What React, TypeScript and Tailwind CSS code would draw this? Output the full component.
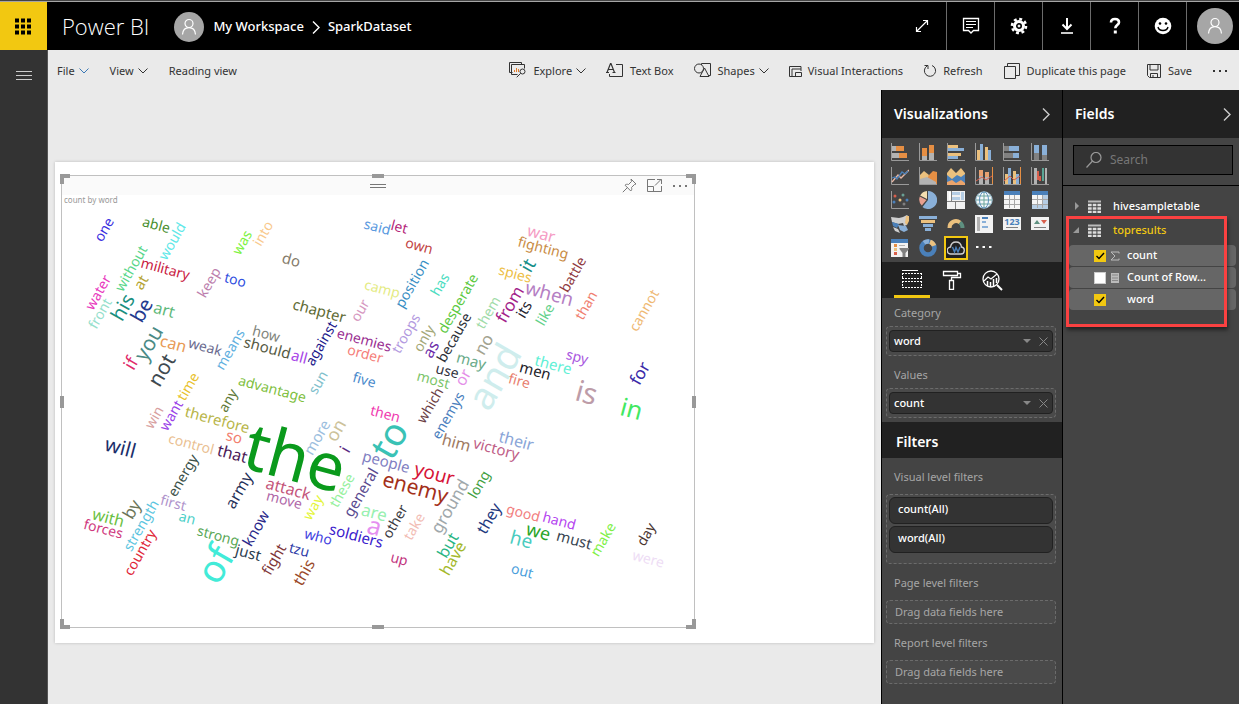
import React from 'react';
import { clsx } from 'clsx';

type Direction = 'up' | 'down';
type Word = [text: string, x: number, y: number, size: number, direction: Direction, color: string];

const WORDS: Word[] = [
  ['the', 294, 463, 66, 'down', '#0a9a1c'],
  ['to', 392, 441, 38, 'up', '#3ac2b5'],
  ['of', 218, 566, 38, 'up', '#42ebd8'],
  ['and', 497, 378, 38, 'up', '#cfeded'],
  ['is', 586, 395, 29, 'down', '#bd9ca8'],
  ['in', 631, 411, 25, 'down', '#42e862'],
  ['a', 374, 528, 25, 'down', '#e590f0'],
  ['enemy', 415, 489, 21, 'down', '#a3301a'],
  ['you', 150, 344, 21, 'up', '#4a8a85'],
  ['not', 163, 371, 21, 'up', '#3f4a50'],
  ['will', 120, 449, 20, 'down', '#1c2f6b'],
  ['your', 434, 475, 19, 'down', '#d61438'],
  ['when', 549, 295, 19, 'down', '#b57fc4'],
  ['his', 124, 308, 20, 'up', '#1a8f80'],
  ['be', 143, 311, 20, 'up', '#243a8f'],
  ['it', 529, 266, 19, 'up', '#178f8a'],
  ['he', 521, 541, 19, 'down', '#4accc0'],
  ['we', 538, 533, 18, 'down', '#2aa52a'],
  ['if', 132, 364, 18, 'up', '#e02a6a'],
  ['on', 337, 431, 18, 'up', '#ccc29a'],
  ['ground', 451, 507, 17, 'up', '#a0a8ab'],
  ['from', 511, 305, 17, 'up', '#a31f8a'],
  ['for', 641, 374, 17, 'up', '#3a2aa8'],
  ['are', 374, 514, 17, 'down', '#98f0b0'],
  ['no', 485, 345, 17, 'up', '#a3a390'],
  ['by', 133, 510, 17, 'up', '#6b7558'],
  ['with', 108, 519, 16, 'down', '#6abf42'],
  ['can', 173, 345, 16, 'down', '#e89a55'],
  ['war', 541, 235, 16, 'down', '#f59cc4'],
  ['as', 432, 350, 16, 'up', '#6a2aa8'],
  ['or', 464, 378, 16, 'up', '#e48fe8'],
  ['him', 456, 444, 16, 'down', '#a07a62'],
  ['their', 516, 442, 16, 'down', '#8aa5d8'],
  ['they', 490, 519, 16, 'up', '#1f3a80'],
  ['but', 449, 546, 16, 'up', '#2ab583'],
  ['have', 454, 559, 16, 'up', '#a3b82a'],
  ['that', 232, 455, 16, 'down', '#4a1a58'],
  ['army', 240, 491, 16, 'up', '#1f2f58'],
  ['attack', 288, 490, 16, 'down', '#c4557a'],
  ['this', 305, 573, 16, 'up', '#9a4a2a'],
  ['i', 346, 450, 16, 'up', '#5a2a82'],
  ['art', 164, 311, 16, 'down', '#5fb97a'],
  ['at', 142, 283, 15, 'up', '#b5a433'],
  ['should', 267, 349, 15, 'down', '#575b45'],
  ['its', 525, 310, 15, 'up', '#22202c'],
  ['may', 471, 362, 15, 'down', '#6aab8a'],
  ['men', 535, 372, 15, 'down', '#222228'],
  ['there', 553, 366, 15, 'down', '#62f0d6'],
  ['victory', 496, 450, 15, 'down', '#bf5f88'],
  ['people', 386, 463, 15, 'down', '#8080c2'],
  ['general', 362, 493, 15, 'up', '#5a4a90'],
  ['soldiers', 356, 537, 15, 'down', '#3a20cc'],
  ['must', 574, 541, 15, 'down', '#3a4652'],
  ['so', 234, 438, 15, 'down', '#f28070'],
  ['more', 318, 438, 15, 'up', '#9cbede'],
  ['just', 248, 554, 15, 'down', '#2c4050'],
  ['know', 257, 529, 15, 'up', '#2a288a'],
  ['fight', 275, 560, 15, 'up', '#80383a'],
  ['one', 105, 230, 14, 'up', '#3b2fe0'],
  ['able', 156, 226, 14, 'down', '#4a8f2f'],
  ['would', 173, 242, 14, 'up', '#5fe8e8'],
  ['was', 243, 243, 14, 'up', '#7df23f'],
  ['into', 264, 234, 14, 'up', '#f9c98d'],
  ['do', 291, 261, 15, 'down', '#857b6b'],
  ['without', 132, 269, 14, 'up', '#5ad68a'],
  ['military', 165, 270, 14, 'down', '#c9203f'],
  ['keep', 210, 283, 14, 'up', '#bd7fae'],
  ['too', 235, 281, 14, 'down', '#2f4fe0'],
  ['water', 99, 293, 14, 'up', '#e838bd'],
  ['front', 101, 314, 14, 'up', '#96e0cc'],
  ['chapter', 319, 312, 15, 'down', '#5f6b35'],
  ['how', 266, 335, 14, 'down', '#7f857b'],
  ['against', 322, 344, 14, 'up', '#22188a'],
  ['all', 299, 358, 15, 'down', '#a845e8'],
  ['weak', 205, 348, 14, 'down', '#6b6b8f'],
  ['means', 231, 350, 14, 'up', '#5fb0e0'],
  ['time', 189, 387, 14, 'up', '#e8c12a'],
  ['advantage', 272, 390, 14, 'down', '#7fbf3f'],
  ['sun', 319, 383, 14, 'up', '#80c0cc'],
  ['said', 377, 228, 14, 'down', '#5a9ae0'],
  ['let', 399, 228, 14, 'down', '#b5287a'],
  ['own', 419, 247, 14, 'down', '#c24545'],
  ['position', 413, 284, 14, 'up', '#3a8fc4'],
  ['has', 441, 285, 14, 'up', '#4adcc0'],
  ['camp', 382, 290, 14, 'down', '#e4eb85'],
  ['our', 361, 311, 14, 'up', '#d698bf'],
  ['desperate', 459, 304, 14, 'up', '#5cc93f'],
  ['them', 489, 313, 14, 'up', '#a0dba8'],
  ['like', 546, 315, 14, 'up', '#62d18a'],
  ['than', 587, 306, 14, 'up', '#f08070'],
  ['battle', 574, 275, 14, 'up', '#8f3b42'],
  ['spies', 515, 275, 14, 'down', '#edc047'],
  ['fighting', 543, 249, 14, 'down', '#c98c45'],
  ['cannot', 645, 311, 14, 'up', '#efb974'],
  ['enemies', 364, 341, 14, 'down', '#9a2f92'],
  ['order', 365, 355, 14, 'down', '#f57f7a'],
  ['troops', 407, 334, 14, 'up', '#b39ae0'],
  ['only', 425, 339, 14, 'up', '#a3a878'],
  ['because', 455, 338, 14, 'up', '#2d3038'],
  ['use', 447, 372, 14, 'down', '#333340'],
  ['most', 433, 381, 14, 'down', '#7cc56a'],
  ['fire', 519, 382, 14, 'down', '#e88070'],
  ['spy', 577, 358, 14, 'down', '#a857e0'],
  ['five', 364, 381, 14, 'down', '#4a8acc'],
  ['then', 385, 415, 14, 'down', '#f03ab0'],
  ['which', 431, 406, 14, 'up', '#6b3f45'],
  ['enemys', 449, 416, 14, 'up', '#4a80bd'],
  ['long', 480, 485, 14, 'up', '#42a042'],
  ['these', 343, 491, 14, 'up', '#94f09c'],
  ['other', 396, 522, 14, 'up', '#3a3a42'],
  ['take', 415, 527, 14, 'up', '#f2bdb5'],
  ['up', 399, 560, 14, 'down', '#c23580'],
  ['good', 523, 514, 14, 'down', '#f28080'],
  ['hand', 559, 522, 14, 'down', '#b545f0'],
  ['make', 604, 540, 14, 'up', '#80f048'],
  ['day', 647, 535, 14, 'up', '#4a3530'],
  ['were', 648, 560, 14, 'down', '#eeddf5'],
  ['out', 522, 572, 14, 'down', '#4ca0dc'],
  ['win', 155, 418, 14, 'up', '#d8a0a0'],
  ['want', 172, 416, 14, 'up', '#9a42e8'],
  ['therefore', 217, 421, 15, 'down', '#b8b548'],
  ['any', 229, 401, 14, 'up', '#5f7a3a'],
  ['control', 191, 445, 14, 'down', '#eabf92'],
  ['energy', 184, 476, 14, 'up', '#3a5048'],
  ['move', 284, 501, 14, 'down', '#b068a8'],
  ['way', 314, 508, 14, 'up', '#e4f53a'],
  ['first', 173, 504, 14, 'down', '#b094cc'],
  ['forces', 103, 530, 14, 'down', '#d03a80'],
  ['strength', 142, 526, 14, 'up', '#5cc5e0'],
  ['an', 187, 519, 14, 'down', '#4cd0c8'],
  ['country', 141, 553, 14, 'up', '#e02838'],
  ['strong', 218, 537, 14, 'down', '#5ba858'],
  ['who', 318, 538, 14, 'down', '#4242e0'],
  ['tzu', 299, 551, 14, 'down', '#3040a8'],
];

const ANGLE: Record<Direction, number> = { up: -60, down: 15 };

function WordCloud() {
  return (
    <svg viewBox="62 206 632 421" className="block w-full font-['Noto_Sans',sans-serif]" role="img" aria-label="count by word">
      {WORDS.map(([text, x, y, size, direction, color]) => (
        <text
          key={text}
          transform={`translate(${x} ${y}) rotate(${ANGLE[direction]})`}
          y={size * 0.27}
          fontSize={size}
          fill={color}
          textAnchor="middle"
        >
          {text}
        </text>
      ))}
    </svg>
  );
}

interface IconProps {
  children: React.ReactNode;
  size?: number;
  className?: string;
}

function Icon({ children, size = 18, className = '' }: IconProps) {
  return (
    <svg
      width={size}
      height={size}
      viewBox={`0 0 ${size} ${size}`}
      fill="none"
      stroke="currentColor"
      className={clsx('shrink-0', className)}
      aria-hidden="true"
    >
      {children}
    </svg>
  );
}

function Chevron({ className = '' }: { className?: string }) {
  return (
    <svg width="10" height="6" viewBox="0 0 10 6" fill="none" stroke="currentColor" className={className} aria-hidden="true">
      <path d="M.5.5 5 5 9.5.5" />
    </svg>
  );
}

function ChevronRight({ className = '' }: { className?: string }) {
  return (
    <svg width="8" height="13" viewBox="0 0 8 13" fill="none" stroke="currentColor" className={className} aria-hidden="true">
      <path d="M1 .5 7 6.5 1 12.5" strokeWidth="1.4" />
    </svg>
  );
}

function Avatar({ large = false }: { large?: boolean }) {
  return (
    <span className={clsx('flex items-center justify-center rounded-full bg-[#a6a6a6] text-white', large ? 'size-9' : 'size-[30px]')}>
      <Icon size={18}>
        <circle cx="9" cy="5.5" r="4" strokeWidth="1.2" />
        <path d="M2.5 16.5c.3-4 2.8-6.8 6.5-6.8s6.2 2.8 6.5 6.8" strokeWidth="1.2" />
      </Icon>
    </span>
  );
}

const HEADER_ACTIONS = [
  {
    label: 'Comments',
    icon: (
      <Icon>
        <path d="M1.5 1.5h15v12h-5L9 16l-2.5-2.5h-5z" strokeWidth="1.3" />
        <path d="M4 4.500h10M4 7.500h10M4 10.500h7" />
      </Icon>
    ),
  },
  {
    label: 'Settings',
    icon: (
      <Icon>
        <circle cx="9" cy="9" r="4.5" strokeWidth="3" />
        <circle cx="9" cy="9" r="7" strokeWidth="2.6" strokeDasharray="2.9 2.6" />
        <circle cx="9" cy="9" r="1" fill="currentColor" />
      </Icon>
    ),
  },
  {
    label: 'Download',
    icon: (
      <Icon>
        <path d="M9 1v11M4.5 7.5 9 12l4.5-4.5" strokeWidth="2" />
        <path d="M3 16h12" strokeWidth="1.6" />
      </Icon>
    ),
  },
  {
    label: 'Help',
    icon: (
      <Icon>
        <path d="M5 5.5C5 3.3 6.5 2 9 2s4 1.3 4 3.3c0 2.7-3.7 2.9-3.7 5.9" strokeWidth="2.6" />
        <path d="M9.3 13.5v3" strokeWidth="3" />
      </Icon>
    ),
  },
  {
    label: 'Feedback',
    icon: (
      <Icon>
        <circle cx="9" cy="9" r="8.3" fill="currentColor" stroke="none" />
        <circle cx="6" cy="6.5" r="1.3" fill="#000" stroke="none" />
        <circle cx="12" cy="6.5" r="1.3" fill="#000" stroke="none" />
        <path d="M4 10c1 4.6 9 4.6 10 0" stroke="#000" strokeWidth="1.4" />
      </Icon>
    ),
  },
];

function Header() {
  return (
    <header className="flex h-[50px] border-t border-[#444] bg-black text-white">
      <div className="flex flex-1 border-t border-[#a5a5a5]">
        <button className="flex w-[47px] items-center justify-center bg-[#f2c811] text-black" aria-label="App launcher">
          <Icon size={17}>
            <path d="M0 2.5h17M0 8.5h17M0 14.5h17" strokeWidth="4" strokeDasharray="4 2" />
          </Icon>
        </button>
        <a href="#home" className="flex items-center pr-[25px] pl-[15px] font-['Open_Sans',sans-serif] text-[22px] font-light">
          Power BI
        </a>
        <nav className="flex items-center pt-0.5 text-[13px] font-medium">
          <Avatar />
          <a href="#workspace" className="ml-[9px]">My Workspace</a>
          <ChevronRight className="mx-2" />
          <a href="#dataset">SparkDataset</a>
        </nav>
        <div className="ml-auto flex">
          <button className="flex w-12 items-center justify-center" aria-label="Full screen">
            <Icon size={14}>
              <path d="M2 12 12 2M8 1.5h4.500V6M6 12.5H1.500V8" strokeWidth="1.2" />
            </Icon>
          </button>
          {HEADER_ACTIONS.map(({ label, icon }) => (
            <button key={label} aria-label={label} className="flex w-12 items-center justify-center border-l border-[#6b6b6b]">
              {icon}
            </button>
          ))}
          <button className="flex w-[53px] items-center justify-center border-l border-[#6b6b6b] pl-1" aria-label="Account">
            <Avatar large />
          </button>
        </div>
      </div>
    </header>
  );
}

const TOOLS = [
  {
    label: 'Explore',
    chevron: true,
    icon: (
      <Icon>
        <path d="M3.5 10.5h-3V.5h12v2M8.500 12.500h-6v-10h13v4" />
        <path d="M5.5 10V8M7.5 10V6M9.5 10V7" stroke="#e07b2a" />
        <circle cx="13.500" cy="9.500" r="2.500" />
        <path d="m11.700 11.300-4 4" />
      </Icon>
    ),
  },
  {
    label: 'Text Box',
    icon: (
      <Icon>
        <path d="M10 2.5h6.5v12h-13V12" />
        <path d="M1 10.5 4.500 1.5h.5l3.500 9M2.500 7.500h5M0 10.500h3M6.500 10.500h3" strokeWidth="1.2" />
      </Icon>
    ),
  },
  {
    label: 'Shapes',
    chevron: true,
    icon: (
      <Icon>
        <path d="M7.5 3V1.500h9v12h-2" />
        <circle cx="5" cy="6.5" r="4.5" />
        <path d="m10.500 6 4.500 8.500H6z" />
      </Icon>
    ),
  },
  {
    label: 'Visual Interactions',
    icon: (
      <Icon size={13}>
        <path d="M7 11.5H.5V1.500h11.500V6M3 11.500V4h9" />
        <path d="M6.500 7.500h6v4h-6z" />
      </Icon>
    ),
  },
  {
    label: 'Refresh',
    icon: (
      <Icon size={14}>
        <path d="M9 1.500a5.600 5.600 0 1 1-5 .500M1.500 1.500H5v3.500" />
      </Icon>
    ),
  },
  {
    label: 'Duplicate this page',
    icon: (
      <Icon>
        <path d="M1.500 4.500h11v12h-11zM4.500 4.500v-3h12v12h-4" />
      </Icon>
    ),
  },
  {
    label: 'Save',
    icon: (
      <Icon size={16}>
        <path d="M1.500 1.500h13v13h-11l-2-2z" />
        <path d="M4 1.500v5.500h8V1.500M4.500 14.500v-4h7v4M7 14.500V12" />
      </Icon>
    ),
  },
];

function Toolbar() {
  return (
    <div className="flex h-10 items-center bg-[#eaeaea] px-[9px] pt-0.5 text-[11px] text-[#333]">
      <div className="flex gap-[21px]">
        <button className="flex items-center gap-1">File <Chevron className="text-[#3a78b5]" /></button>
        <button className="flex items-center gap-1">View <Chevron /></button>
        <button>Reading view</button>
      </div>
      <div className="ml-auto flex items-center gap-5">
        {TOOLS.map(({ label, icon, chevron }) => (
          <button key={label} className="flex items-center gap-[6px] whitespace-nowrap">
            {icon}
            <span>{label}</span>
            {chevron && <Chevron className="-ml-0.5" />}
          </button>
        ))}
        <button aria-label="More options" className="pr-0.5">
          <Icon size={16}>
            <path d="M1 8h2M7 8h2M13 8h2" strokeWidth="2" />
          </Icon>
        </button>
      </div>
    </div>
  );
}

function ResizeHandles() {
  const handle = 'pointer-events-none absolute border-[#999]';
  return (
    <>
      <span className={clsx(handle, '-top-0.5 -left-0.5 size-[10px] border-t-4 border-l-4')} />
      <span className={clsx(handle, '-top-0.5 -right-0.5 size-[10px] border-t-4 border-r-4')} />
      <span className={clsx(handle, '-bottom-0.5 -left-0.5 size-[10px] border-b-4 border-l-4')} />
      <span className={clsx(handle, '-right-0.5 -bottom-0.5 size-[10px] border-r-4 border-b-4')} />
      <span className={clsx(handle, '-top-0.5 left-1/2 w-3 -translate-x-1/2 border-t-4')} />
      <span className={clsx(handle, '-bottom-0.5 left-1/2 w-3 -translate-x-1/2 border-b-4')} />
      <span className={clsx(handle, 'top-1/2 -left-0.5 h-3 -translate-y-1/2 border-l-4')} />
      <span className={clsx(handle, 'top-1/2 -right-0.5 h-3 -translate-y-1/2 border-r-4')} />
    </>
  );
}

function ReportCanvas() {
  return (
    <main className="min-w-0 flex-1 bg-[#eaeaea] px-[7px] pt-[72px]">
      <div className="aspect-[819/481] bg-white px-[6px] pt-[13px] shadow-[0_0_3px_rgba(0,0,0,0.2)]">
        <section className="relative w-[634px] max-w-full border border-[#c0c0c0]">
          <div className="grid h-[19px] grid-cols-3 items-center bg-[#fafafa] px-1.5 text-[#777]">
            <span />
            <Icon size={16} className="justify-self-center">
              <path d="M0 6.5h16M0 9.5h16" />
            </Icon>
            <div className="flex items-center justify-end gap-[10px]">
              <button aria-label="Pin visual">
                <Icon size={15}>
                  <path d="m9 1 5 5-1.500.5-3 3c.5 1.500.2 2.700-.7 3.500L3 7.200c.8-.9 2-1.200 3.500-.7l3-3zM5.500 9.500.8 14.200" />
                </Icon>
              </button>
              <button aria-label="Focus mode">
                <Icon size={15}>
                  <path d="M8 1.500H.5v12h14V8M.5 8.500h6v5M8 7.500l6-6M10 1.500h4.500V6" />
                </Icon>
              </button>
              <button aria-label="More options">
                <Icon size={16}>
                  <path d="M1 8h2M7 8h2M13 8h2" strokeWidth="2" />
                </Icon>
              </button>
            </div>
          </div>
          <h2 className="h-[11px] px-0.5 text-[8px] leading-[10px] text-[#999]">count by word</h2>
          <WordCloud />
          <ResizeHandles />
        </section>
      </div>
    </main>
  );
}

const ORANGE = '#e68f44';
const TAN = '#ecc17e';
const BLUE = '#8ab0d8';
const NAVY = '#4a80ba';
const SILVER = '#b3b3b3';
const GREY = '#808080';
const RED = '#d95f4c';

type Rect = [x: number, y: number, width: number, height: number, fill: string];

function Rects({ items }: { items: Rect[] }) {
  return (
    <>
      {items.map(([x, y, width, height, fill], i) => (
        <rect key={i} x={x} y={y} width={width} height={height} fill={fill} stroke="none" />
      ))}
    </>
  );
}

const axis = <path d="M.5 0v17.5H18" stroke="#9a9a9a" />;

const VISUALS: { label: string; art: React.ReactNode; axis?: boolean; selected?: boolean }[] = [
  { label: 'Stacked bar chart', axis: true, art: <Rects items={[[1, 3, 4, 5, SILVER], [5, 3, 8, 5, ORANGE], [1, 10, 7, 5, SILVER], [8, 10, 8, 5, ORANGE]]} /> },
  { label: 'Stacked column chart', axis: true, art: <Rects items={[[3, 5, 5, 8, ORANGE], [3, 13, 5, 4, SILVER], [10, 2, 5, 8, ORANGE], [10, 10, 5, 7, SILVER]]} /> },
  { label: 'Clustered bar chart', axis: true, art: <Rects items={[[1, 2, 10, 3, TAN], [1, 5, 16, 3, BLUE], [1, 10, 13, 3, TAN], [1, 13, 10, 3, BLUE]]} /> },
  { label: 'Clustered column chart', axis: true, art: <Rects items={[[2, 7, 3, 10, TAN], [5, 1, 3, 16, BLUE], [10, 4, 3, 13, TAN], [13, 7, 3, 10, BLUE]]} /> },
  { label: '100% stacked bar chart', axis: true, art: <Rects items={[[1, 3, 5, 5, GREY], [6, 3, 10, 5, BLUE], [1, 10, 9, 5, GREY], [10, 10, 6, 5, BLUE]]} /> },
  { label: '100% stacked column chart', axis: true, art: <Rects items={[[3, 2, 5, 8, BLUE], [3, 10, 5, 7, GREY], [11, 2, 5, 10, BLUE], [11, 12, 5, 5, GREY]]} /> },
  {
    label: 'Line chart',
    axis: true,
    art: (
      <>
        <path d="m1 15 6-7 3 3 8-8" stroke="#e8b8a5" strokeWidth="1.3" />
        <path d="m1 11 3-1 2 2 5-7 3 2 3-3" stroke={NAVY} strokeWidth="1.3" />
      </>
    ),
  },
  {
    label: 'Area chart',
    axis: true,
    art: (
      <g stroke="none">
        <path d="M1 17V9l8 0 5-5 4 1v12z" fill={ORANGE} />
        <path d="M1 8l4-4 5 4-2 4-7 1z" fill={TAN} />
        <path d="M1 12l7-2 9 5v2H1z" fill={SILVER} />
      </g>
    ),
  },
  {
    label: 'Stacked area chart',
    art: (
      <g stroke="none">
        <path d="M0 6l4-5 5 5 5-5 4 5v11H0z" fill={TAN} />
        <path d="M0 8l5 4 5-4 4 2 4-3v10H0z" fill={NAVY} />
        <path d="M0 15l5-2 4 3 5-3 4 3v2H0z" fill="#eba46b" />
      </g>
    ),
  },
  {
    label: 'Line and stacked column chart',
    axis: true,
    art: (
      <>
        <Rects items={[[4, 3, 4, 6, '#e8a070'], [4, 9, 4, 8, SILVER], [10, 5, 4, 5, '#e8a070'], [10, 10, 4, 7, SILVER]]} />
        <path d="m1 14 6-4 4 3 6-4" stroke={RED} />
        <path d="M17.5 0v17" stroke={ORANGE} />
      </>
    ),
  },
  {
    label: 'Line and clustered column chart',
    axis: true,
    art: (
      <>
        <Rects items={[[2, 7, 3, 10, TAN], [5, 1, 3, 16, BLUE], [10, 4, 3, 13, TAN], [13, 7, 3, 10, BLUE]]} />
        <path d="m1 14 6-5 4 4 6-4" stroke={RED} />
        <path d="M17.5 0v17" stroke={ORANGE} />
      </>
    ),
  },
  { label: 'Waterfall chart', axis: true, art: <Rects items={[[3, 1, 3, 16, SILVER], [6, 4, 2, 9, RED], [8, 9, 2, 5, RED], [11, 1, 2, 13, '#5aa594'], [14, 1, 2, 16, SILVER]]} /> },
  {
    label: 'Scatter chart',
    axis: true,
    art: (
      <g stroke="none">
        <circle cx="4" cy="5" r="1.5" fill={RED} />
        <circle cx="12" cy="4" r="1.5" fill="#6aa094" />
        <circle cx="3" cy="11" r="1.5" fill={NAVY} />
        <circle cx="9" cy="9" r="1.5" fill={TAN} />
        <circle cx="16" cy="9" r="1.5" fill={NAVY} />
        <circle cx="13" cy="13" r="1.5" fill={GREY} />
      </g>
    ),
  },
  {
    label: 'Pie chart',
    art: (
      <g stroke="none">
        <path d="M9 9V0a9 9 0 1 1-5.5 16z" fill={BLUE} />
        <path d="M8 8V0a8.5 8.5 0 0 0-6.8 4.5z" fill="#f2ddb0" />
        <path d="M7.5 9 .8 5.5a8.5 8.5 0 0 0 2 9z" fill="#e8a090" />
      </g>
    ),
  },
  { label: 'Treemap', art: <Rects items={[[0, 0, 18, 18, '#f2f2f2'], [2, 1, 2, 8, '#fff'], [5, 1, 8, 3, '#b5cde4'], [5, 6, 8, 3, '#b5cde4'], [14, 1, 3, 8, '#b5cde4'], [4, 0, 1, 10, GREY], [0, 10, 18, 1, GREY], [8, 10, 1, 8, GREY]]} /> },
  {
    label: 'Map',
    art: (
      <>
        <circle cx="9" cy="9" r="8.2" fill="#f5f8fb" stroke="#9cc0d5" />
        <path d="M1 9h16M9 1v16M2.5 5h13M2.5 13h13" stroke="#6aa59c" />
        <ellipse cx="9" cy="9" rx="4.5" ry="8" stroke="#5f93bd" />
      </>
    ),
  },
  {
    label: 'Table',
    art: (
      <>
        <Rects items={[[1, 0, 16, 18, '#f5f5f5'], [1, 0, 16, 4, NAVY]]} />
        <path d="M1 8.5h16M1 13.5h16M6.5 4v13M11.5 4v13" stroke="#a6a6a6" />
      </>
    ),
  },
  {
    label: 'Matrix',
    art: (
      <>
        <Rects items={[[1, 0, 16, 18, '#f5f5f5'], [1, 0, 16, 4, NAVY], [12, 4, 5, 14, '#b5cde4'], [1, 14, 16, 4, '#b5cde4']]} />
        <path d="M1 8.5h16M1 13.5h16M6.5 4v13M11.5 4v13" stroke="#a6a6a6" />
      </>
    ),
  },
  {
    label: 'Filled map',
    art: (
      <g stroke="none">
        <path d="M0 2l8 1 4-1 4-2 2 2-3 4 1 4-3 1-1-3-5 1-6-2z" fill="#cfcfcf" />
        <path d="M1 7l7 2-2 4-4-2z" fill={NAVY} />
        <path d="M15 1h3v5l-2 4-2-2z" fill={TAN} />
        <path d="M7 10l8 1 2 4-4 2-4-2z" fill={BLUE} />
        <path d="M2 12l5 2 2 4-5-2z" fill="#cfcfcf" />
      </g>
    ),
  },
  { label: 'Funnel', art: <Rects items={[[0, 1, 18, 3, BLUE], [2, 5, 14, 3, TAN], [4, 9, 10, 3, BLUE], [6, 13, 6, 3, BLUE]]} /> },
  {
    label: 'Gauge',
    art: (
      <>
        <path d="M2.5 13a6.5 6.5 0 0 1 10.500-5.500" stroke={TAN} strokeWidth="4" />
        <path d="M13 7.5a6.5 6.5 0 0 1 2.500 5.500" stroke="#5e9080" strokeWidth="4" />
      </>
    ),
  },
  { label: 'Multi-row card', art: <Rects items={[[0, 0, 18, 18, '#f2f2f2'], [2, 2, 3, 14, SILVER], [7, 2, 6, 2, NAVY], [7, 6, 4, 2, BLUE], [7, 11, 6, 2, BLUE]]} /> },
  {
    label: 'Card',
    art: (
      <>
        <Rects items={[[0, 2, 18, 13, '#f2f2f2'], [3, 12, 12, 1, GREY]]} />
        <text x="9" y="10" fontSize="9" fontWeight="700" fill={NAVY} stroke="none" textAnchor="middle">123</text>
      </>
    ),
  },
  {
    label: 'KPI',
    art: (
      <>
        <Rects items={[[0, 2, 18, 13, '#f2f2f2'], [3, 12, 12, 1, GREY]]} />
        <path d="M3 9l3-4 3 4z" fill="#5e9080" stroke="none" />
        <path d="M10 5h6l-3 4z" fill={RED} stroke="none" />
      </>
    ),
  },
  {
    label: 'Slicer',
    art: (
      <>
        <Rects items={[[0, 0, 17, 18, '#f2f2f2'], [0, 0, 17, 4, NAVY], [3, 5, 3, 3, ORANGE], [3, 9, 3, 3, TAN], [3, 13, 3, 3, RED], [8, 6, 6, 1, SILVER]]} />
        <path d="M8.5 9H18v1l-3.500 4v4h-3v-4l-3-4z" fill={GREY} stroke="none" />
      </>
    ),
  },
  {
    label: 'Donut chart',
    art: (
      <>
        <circle cx="9" cy="9" r="6.5" stroke={NAVY} strokeWidth="4.5" />
        <path d="M5 3.8a6.5 6.5 0 0 1 5-1.300" stroke={BLUE} strokeWidth="4.5" />
        <path d="M11 2.8a6.5 6.5 0 0 1 4 4" stroke={TAN} strokeWidth="4.5" />
      </>
    ),
  },
  {
    label: 'Word cloud',
    selected: true,
    art: (
      <>
        <path d="M4 15a3.500 3.500 0 0 1-.5-7C4 4.500 6.500 3 9 3s5 1.500 5.500 5c4 .5 3.500 7-.5 7z" stroke="#d0d0d0" strokeWidth="1.4" />
        <path d="m5.5 8 2 5L9 8.500l2 4.500 2-5" stroke={NAVY} strokeWidth="1.4" />
      </>
    ),
  },
  { label: 'More visuals', art: <path d="M1 8h2.500M7.500 8H10M14 8h2.500" stroke="#fff" strokeWidth="2" /> },
];

function PaneHeader({ title, className = 'pr-3' }: { title: string; className?: string }) {
  return (
    <div className={clsx('flex h-12 items-center justify-between bg-[#212121] pl-3 text-white', className)}>
      <h2 className="text-sm font-semibold">{title}</h2>
      <button aria-label={`Collapse ${title}`} className="text-[#ccc]">
        <ChevronRight />
      </button>
    </div>
  );
}

function FieldWell({ label, value }: { label: string; value: string }) {
  return (
    <div className="px-1">
      <h3 className="flex h-[28px] items-center pt-0.5 pl-2 text-[11px] text-[#a6a6a6]">{label}</h3>
      <div className="mr-0.5 rounded border border-dashed border-[#6b6b6b] bg-[#4a4a4a] px-0.5 py-[3px]">
        <div className="flex h-[22px] items-center rounded border border-[#212121] bg-[#333] px-1 text-[11px] font-medium text-white">
          <span className="flex-1">{value}</span>
          <button aria-label={`${value} options`} className="mr-2">
            <Icon size={8} className="text-[#888]">
              <path d="M0 2h8L4 6z" fill="currentColor" stroke="none" />
            </Icon>
          </button>
          <button aria-label={`Remove ${value}`}>
            <Icon size={9} className="text-[#888]">
              <path d="m.5.5 8 8M8.500.5l-8 8" />
            </Icon>
          </button>
        </div>
      </div>
    </div>
  );
}

function DropZone({ label }: { label: string }) {
  return (
    <div className="px-1">
      <h3 className="flex h-9 items-center pt-0.5 pl-2 text-[11px] text-[#a6a6a6]">{label}</h3>
      <div className="mr-0.5 flex h-6 items-center rounded border border-dashed border-[#6b6b6b] bg-[#4a4a4a] pl-2 text-[11px] text-[#a6a6a6]">
        Drag data fields here
      </div>
    </div>
  );
}

function VisualizationsPane() {
  return (
    <aside className="w-[181px] shrink-0 border-l border-black bg-[#444]">
      <PaneHeader title="Visualizations" />
      <div className="grid auto-rows-[24px] grid-cols-[repeat(6,28px)] px-1 py-0.5">
        {VISUALS.map(({ label, art, axis: hasAxis, selected }) => (
          <button
            key={label}
            aria-label={label}
            className={clsx(
              'm-auto flex items-center justify-center',
              selected ? 'size-[22px] bg-[#212121] outline-2 -outline-offset-1 outline-[#f2c811]' : 'size-[18px]',
            )}
          >
            <Icon>
              {hasAxis && axis}
              {art}
            </Icon>
          </button>
        ))}
      </div>
      <div className="flex h-9 gap-1 bg-[#212121] pl-3 text-white">
        <button aria-label="Fields" className="flex w-9 items-center justify-center border-b-3 border-[#f2c811]">
          <Icon size={20}>
            <path d="M0 1.500h16" />
            <path d="M0 4.500h20M0 9.500h20M0 12.500h20M0 18.500h20M.5 4v6M19.500 4v6M.5 12v7M19.500 12v7" strokeDasharray="2 1" />
          </Icon>
        </button>
        <button aria-label="Format" className="flex w-9 items-center justify-center">
          <Icon size={20}>
            <path d="M1.500 1.500h14v4h-14zM15.500 3.500h3v4h-9v3" strokeWidth="1.3" />
            <path d="M7.500 10.500h4v9h-4z" strokeWidth="1.3" />
          </Icon>
        </button>
        <button aria-label="Analytics" className="flex w-9 items-center justify-center">
          <Icon size={21}>
            <circle cx="9" cy="9" r="8" strokeWidth="1.3" />
            <path d="m15 15 5 5" strokeWidth="2" />
            <path d="m2 11 4-4 3 2 6-5" strokeWidth="1.2" />
            <path d="M5.5 16v-5M8.5 17v-5M11.5 16V9M14.5 13V8" strokeWidth="1.5" />
          </Icon>
        </button>
      </div>
      <div className="flex flex-col gap-1 pb-1">
        <FieldWell label="Category" value="word" />
        <FieldWell label="Values" value="count" />
      </div>
      <h2 className="flex h-9 items-center bg-[#212121] pt-1 pl-[14px] text-sm font-semibold text-white">Filters</h2>
      <div className="px-1">
        <h3 className="flex h-9 items-center pt-0.5 pl-2 text-[11px] text-[#a6a6a6]">Visual level filters</h3>
        <div className="mr-0.5 flex flex-col gap-0.5 rounded border border-dashed border-[#6b6b6b] bg-[#4a4a4a] px-0.5 pt-0.5 pb-[10px]">
          {['count(All)', 'word(All)'].map((filter) => (
            <button key={filter} className="flex h-[27px] items-center rounded-md border border-[#212121] bg-[#333] pb-0.5 pl-2 text-[11px] font-medium text-white">
              {filter}
            </button>
          ))}
        </div>
      </div>
      <DropZone label="Page level filters" />
      <DropZone label="Report level filters" />
    </aside>
  );
}

function TableIcon() {
  return (
    <Icon size={13}>
      <path d="M0 1.5h13" stroke="#bbb" strokeWidth="2" />
      <path d="M0 5h13M0 8.500h13M0 12h13" stroke="#ddd" strokeWidth="2.5" strokeDasharray="3.7 1" />
    </Icon>
  );
}

function TableNode({ name, expanded = false }: { name: string; expanded?: boolean }) {
  return (
    <button aria-expanded={expanded} className="flex h-6 w-full items-center pl-[10px] text-[11px] font-medium">
      <Icon size={8} className="mr-[7px] text-[#999]">
        {expanded ? <path d="M6 1v6H0z" fill="currentColor" stroke="none" /> : <path d="M2 0l4 4-4 4z" fill="currentColor" stroke="none" />}
      </Icon>
      <TableIcon />
      <span className={clsx('ml-3', expanded ? 'text-[#f2c811]' : 'text-white')}>{name}</span>
    </button>
  );
}

interface FieldRowProps {
  name: string;
  checked?: boolean;
  icon?: React.ReactNode;
}

function FieldRow({ name, checked = false, icon }: FieldRowProps) {
  return (
    <label className="mr-[3px] ml-1.5 flex h-[21px] items-center rounded bg-[#666] pl-[25px] text-[11px] font-medium text-white">
      <span className="grid size-3 place-items-center">
        <input
          type="checkbox"
          defaultChecked={checked}
          className="peer col-start-1 row-start-1 size-3 appearance-none border border-[#ccc] bg-white checked:border-[#f2c811] checked:bg-[#f2c811]"
        />
        <Icon size={10} className="pointer-events-none invisible col-start-1 row-start-1 text-black peer-checked:visible">
          <path d="m1.5 5 2.500 2.500 5-5.500" strokeWidth="1.4" />
        </Icon>
      </span>
      <span className="flex w-[21px] justify-center pr-1 text-[#bbb]">{icon}</span>
      {name}
    </label>
  );
}

function FieldsPane() {
  return (
    <aside className="w-[177px] shrink-0 border-l border-black bg-[#444]">
      <PaneHeader title="Fields" className="pr-2" />
      <div className="border-b border-black pt-[7px] pr-[6px] pb-[10px] pl-[10px]">
        <label className="flex h-[30px] items-center gap-2 border border-black bg-[#333] pl-3 text-[#999]">
          <Icon size={16}>
            <circle cx="10" cy="5.5" r="5" strokeWidth="1.2" />
            <path d="m6.500 9-6 6.500" strokeWidth="1.2" />
          </Icon>
          <input type="text" placeholder="Search" aria-label="Search fields" className="min-w-0 flex-1 bg-transparent text-xs outline-none placeholder:text-[#777]" />
        </label>
      </div>
      <div className="pt-2">
        <TableNode name="hivesampletable" />
        <div className="relative">
          <TableNode name="topresults" expanded />
          <div className="flex flex-col gap-px pt-[3px]">
            <FieldRow
              name="count"
              checked
              icon={
                <Icon size={10}>
                  <path d="M9 2.500V1H1l4 4-4 4h8V7.500" />
                </Icon>
              }
            />
            <FieldRow
              name="Count of Row..."
              icon={
                <Icon size={10}>
                  <path d="M1 0h8v10H1z" fill="currentColor" stroke="none" />
                  <path d="M2.500 2h5M2.500 5h5M2.500 7.500h5" stroke="#555" strokeDasharray="1 1" />
                </Icon>
              }
            />
            <FieldRow name="word" checked />
          </div>
          <div className="pointer-events-none absolute -top-0.5 right-3 -bottom-[17px] left-[3px] border-3 border-[#fa4141] shadow-[1px_3px_4px_rgba(0,0,0,0.5)]" />
        </div>
      </div>
    </aside>
  );
}

export default function App() {
  return (
    <div className="flex min-h-screen flex-col bg-[#eaeaea] font-['Noto_Sans',sans-serif]">
      <Header />
      <div className="flex flex-1">
        <nav className="w-12 shrink-0 border-r border-[#555] bg-[#333] text-[#ccc]">
          <button aria-label="Navigation" className="flex h-[52px] w-full items-center justify-center">
            <Icon size={16}>
              <path d="M0 3.500h16M0 7.500h16M0 11.500h16" />
            </Icon>
          </button>
        </nav>
        <div className="flex min-w-0 flex-1 flex-col">
          <Toolbar />
          <div className="flex flex-1">
            <ReportCanvas />
            <VisualizationsPane />
            <FieldsPane />
          </div>
        </div>
      </div>
    </div>
  );
}
